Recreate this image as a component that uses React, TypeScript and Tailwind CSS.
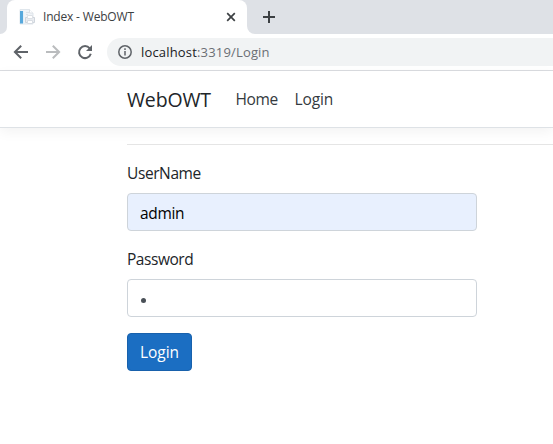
import React from "react";

function PageIcon() {
  return (
    <svg width="16" height="16" viewBox="0 0 16 16" className="shrink-0">
      <path d="M1 .5h9.500l3.500 3.500v11H1z" fill="#f0f4f8" stroke="#dfe6ec" />
      <path d="M1 2h3v12.500H1z" fill="#56a8dc" />
      <path d="M4.500 2v13" stroke="#e4eff7" />
      <path d="M7 3.500h3M7 5.500h2" stroke="#dde2e7" />
      <path d="M10.500 .5V4H14" fill="#fff" stroke="#dde1e6" />
      <path d="M6.500 8.500h9v5h-9z" fill="#e9ecf0" stroke="#cfd5dc" />
      <path d="M8.500 6.500h5v3h-5z" fill="#fff" stroke="#dde1e6" />
      <path d="M8.500 11.500h5v3h-5z" fill="#fff" stroke="#d8dde3" />
    </svg>
  );
}

function TabStrip() {
  return (
    <div className="flex h-[34px] bg-white">
      <div className="w-[7px] rounded-br-lg bg-[#dee1e6]" />
      <div className="w-[240px] bg-[#dee1e6]">
        <div className="flex h-[34px] items-center rounded-t-lg bg-white pl-3 pr-[11px]">
          <PageIcon />
          <span className="ml-2 flex-1 whitespace-nowrap text-[12px] leading-4 tracking-[-0.18px] text-[#3c4043]">Index - WebOWT</span>
          <svg width="10" height="10" viewBox="0 0 10 10" stroke="#3c4043" strokeWidth="1.7">
            <path d="m1.200 1.200 7.600 7.600m0-7.600-7.600 7.600" />
          </svg>
        </div>
      </div>
      <div className="flex flex-1 items-center rounded-bl-lg bg-[#dee1e6] pl-4">
        <svg width="12" height="12" viewBox="0 0 12 12" stroke="#3c4043" strokeWidth="2">
          <path d="M6 0v12M0 6h12" />
        </svg>
      </div>
    </div>
  );
}

function Toolbar() {
  return (
    <div className="flex h-[37px] items-center border-b border-[#dadce0] pl-[13px]">
      <svg width="16" height="16" viewBox="0 0 16 16" fill="none" stroke="#5f6368" strokeWidth="2">
        <path d="M15 8H2.500M8.200 1.700 1.900 8l6.300 6.300" />
      </svg>
      <svg width="16" height="16" viewBox="0 0 16 16" fill="none" stroke="#babcbe" strokeWidth="2" className="ml-4">
        <path d="M1 8h12.500M7.800 1.700 14.100 8l-6.300 6.300" />
      </svg>
      <svg width="16" height="16" viewBox="0 0 16 16" className="ml-4">
        <path d="M12.700 4.300A6 6 0 1 0 13.800 9.800" fill="none" stroke="#5f6368" strokeWidth="2" />
        <path d="M15 1v6H9z" fill="#5f6368" />
      </svg>
      <div className="ml-[14px] flex h-7 flex-1 items-center rounded-l-full bg-[#f1f3f4] pl-[11px]">
        <svg width="14" height="14" viewBox="0 0 14 14" fill="none" stroke="#5f6368" strokeWidth="1.500">
          <circle cx="7" cy="7" r="6.200" />
          <path d="M7 6v4.500M7 3.300v1.600" />
        </svg>
        <span className="ml-[9px] whitespace-nowrap text-[13px] leading-5 tracking-[0.17px] text-[#202124]">
          localhost<span className="text-[#6b6f74]">:3319/Login</span>
        </span>
      </div>
    </div>
  );
}

export default function App() {
  return (
    <div className="h-[444px] overflow-hidden bg-white font-['Open_Sans',sans-serif] text-[15.500px] text-[#212529]">
      <TabStrip />
      <Toolbar />
      <nav className="flex h-[57px] items-center border-b border-[#dee2e6] pl-[127px] shadow-[0_4px_12px_rgba(0,0,0,0.05)]">
        <a className="w-[108.500px] whitespace-nowrap pt-0.5 text-[19.500px] tracking-[-0.15px]">WebOWT</a>
        <a className="w-[59px] pt-0.5 tracking-[-0.4px] text-[#343a40]">Home</a>
        <a className="pt-0.5 tracking-[-0.1px] text-[#343a40]">Login</a>
      </nav>
      <main className="ml-[127px] pt-4">
        <hr className="border-[#e5e5e5]" />
        <form className="w-[350px] pt-4">
          <label className="block h-8 leading-6 tracking-[-0.4px]">UserName</label>
          <div className="flex h-[38px] items-center rounded border border-[#ced4da] bg-[#e8f0fe] px-3 pt-[3px] tracking-[-0.35px] text-black">admin</div>
          <label className="mt-4 block h-8 leading-6 tracking-[-0.45px]">Password</label>
          <div className="flex h-[38px] items-center rounded border border-[#ced4da] bg-white px-3 pt-1">
            <span className="ml-px size-[5px] rounded-full bg-[#495057]" />
          </div>
          <button type="button" className="mt-4 flex h-[38px] w-[65px] items-center justify-center rounded border border-[#1861ac] bg-[#1b6ec2] pt-0.5 text-white">Login</button>
        </form>
      </main>
    </div>
  );
}
